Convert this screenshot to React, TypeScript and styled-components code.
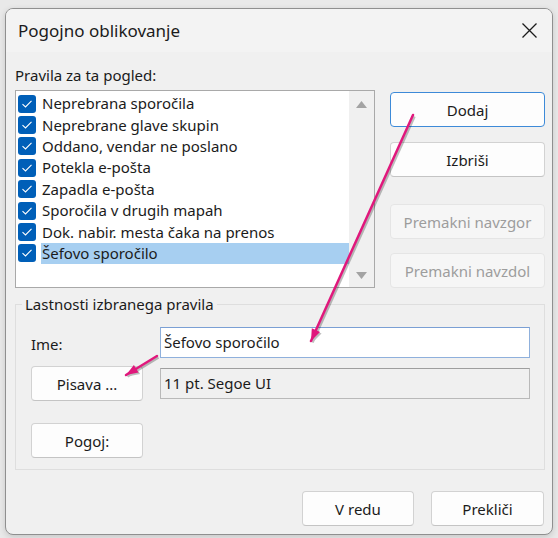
import React from 'react'
import styled, { createGlobalStyle } from 'styled-components'

const colors = {
  text: '#1b1b1b',
  accent: '#005fb8',
  select: '#a7cff1',
  body: '#f0f0f0',
  title: '#f3f3f3',
  line: '#d2d2d2',
  disabled: '#9d9d9d',
  arrow: '#e0187c',
}

const GlobalStyle = createGlobalStyle`
  html, body {
    margin: 0;
    padding: 0;
    background: #e9e9e9;
  }
  body {
    font-family: "Noto Sans", "Open Sans", "DejaVu Sans", sans-serif;
    font-size: 14px;
    color: ${colors.text};
  }
`

const Page = styled.div`
  width: 558px;
  height: 538px;
  box-sizing: border-box;
  padding: 8px 5px 3px 5px;
`

const Window = styled.div`
  position: relative;
  width: 548px;
  height: 527px;
  box-sizing: border-box;
  border: 1px solid #8f8f8f;
  border-radius: 8px;
  overflow: hidden;
  display: flex;
  flex-direction: column;
  background: ${colors.body};
  box-shadow: 0 2px 6px rgba(0, 0, 0, 0.15);
`

const TitleBar = styled.div`
  height: 43px;
  flex: none;
  display: flex;
  align-items: center;
  justify-content: space-between;
  padding: 0 15px 0 12px;
  background: ${colors.title};
  font-size: 17px;
`

const CloseButton = styled.div`
  width: 16px;
  height: 16px;
  display: flex;
  align-items: center;
  justify-content: center;
`

const Body = styled.div`
  flex: 1;
  display: flex;
  flex-direction: column;
  padding: 13px 7px 0 9px;
`

const TopRow = styled.div`
  display: flex;
  gap: 15px;
`

const LeftCol = styled.div`
  width: 360px;
  display: flex;
  flex-direction: column;
`

const Caption = styled.div`
  height: 20px;
  line-height: 20px;
  margin-bottom: 5px;
  font-size: 15px;
`

const ListBox = styled.div`
  height: 198px;
  box-sizing: border-box;
  border: 1px solid #a9a9a9;
  background: #fff;
  display: flex;
`

const Items = styled.div`
  flex: 1;
  padding: 2px 0 0 2px;
`

const Item = styled.div`
  height: 21.4px;
  display: flex;
  align-items: center;
  gap: 5px;
`

const Check = styled.div`
  width: 18px;
  height: 18px;
  border-radius: 3px;
  background: ${colors.accent};
  display: flex;
  align-items: center;
  justify-content: center;
  flex: none;
`

const ItemText = styled.div<{ $selected?: boolean }>`
  flex: 1;
  height: 21px;
  line-height: 21px;
  font-size: 15px;
  padding-left: 1px;
  background: ${({ $selected }) => ($selected ? colors.select : 'transparent')};
`

const ScrollBar = styled.div`
  width: 25px;
  background: ${colors.body};
  display: flex;
  flex-direction: column;
  justify-content: space-between;
  align-items: center;
  padding: 10px 0 8px;
`

const RightCol = styled.div`
  width: 155px;
  padding-top: 27px;
  display: flex;
  flex-direction: column;
`

const Button = styled.button<{ $primary?: boolean; $top?: number; $width?: number }>`
  width: ${({ $width }) => ($width ? `${$width}px` : '100%')};
  height: 35px;
  margin-top: ${({ $top }) => $top || 0}px;
  box-sizing: border-box;
  font-family: inherit;
  font-size: 15px;
  color: ${colors.text};
  background: #fdfdfd;
  border: 1px solid ${({ $primary }) => ($primary ? '#3d8ad8' : colors.line)};
  border-bottom-color: ${({ $primary }) => ($primary ? '#3d8ad8' : '#c4c4c4')};
  border-radius: 4px;
  padding: 0;
  &:disabled {
    background: #f6f6f6;
    border-color: #e5e5e5;
    color: ${colors.disabled};
  }
`

const Group = styled.fieldset`
  margin: 6px 0 0 0;
  padding: 13px 14px 11px 15px;
  width: 530px;
  box-sizing: border-box;
  border: 1px solid #dedede;
  border-radius: 0;
`

const Legend = styled.legend`
  padding: 0 3px;
  margin-left: -9px;
  font-size: 15px;
  line-height: 20px;
`

const PropsGrid = styled.div`
  display: grid;
  grid-template-columns: 112px 1fr;
  column-gap: 17px;
  row-gap: 8px;
  align-items: center;
`

const FieldLabel = styled.div`
  font-size: 15px;
  padding-left: 0;
  align-self: end;
  padding-bottom: 4px;
`

const TextField = styled.div<{ $readonly?: boolean }>`
  height: 31px;
  box-sizing: border-box;
  padding-left: 3px;
  line-height: 29px;
  font-size: 15px;
  background: ${({ $readonly }) => ($readonly ? colors.body : '#fff')};
  border: 1px solid ${({ $readonly }) => ($readonly ? '#b9b9b9' : '#8fb0dc')};
  border-top-color: ${({ $readonly }) => ($readonly ? '#9e9e9e' : '#7a9fd4')};
`

const Footer = styled.div`
  display: flex;
  justify-content: flex-end;
  gap: 17px;
  margin-top: 21px;
  padding-right: 1px;
`

const Overlay = styled.svg`
  position: absolute;
  left: -6px;
  top: -9px;
  width: 558px;
  height: 538px;
  pointer-events: none;
`

const rules = [
  'Neprebrana sporočila',
  'Neprebrane glave skupin',
  'Oddano, vendar ne poslano',
  'Potekla e-pošta',
  'Zapadla e-pošta',
  'Sporočila v drugih mapah',
  'Dok. nabir. mesta čaka na prenos',
  'Šefovo sporočilo',
]

const Tick = () => (
  <svg width="12" height="10" viewBox="0 0 12 10">
    <path d="M1.5 5.2 L4.5 8 L10.5 1.8" fill="none" stroke="#fff" strokeWidth="1.1" />
  </svg>
)

const Triangle = ({ down }: { down?: boolean }) => (
  <svg width="11" height="7" viewBox="0 0 11 7">
    <path d={down ? 'M0 0 H11 L5.5 7 Z' : 'M0 7 H11 L5.5 0 Z'} fill="#a3a3a3" />
  </svg>
)

const arrowHead = (x1: number, y1: number, x2: number, y2: number) => {
  const a = Math.atan2(y2 - y1, x2 - x1)
  const len = 12
  const w = 4.5
  const bx = x2 - len * Math.cos(a)
  const by = y2 - len * Math.sin(a)
  const px = -Math.sin(a) * w
  const py = Math.cos(a) * w
  return `M${x2} ${y2} L${bx + px} ${by + py} L${bx - px} ${by - py} Z`
}

const Arrow = ({ x1, y1, x2, y2 }: { x1: number; y1: number; x2: number; y2: number }) => (
  <g>
    <g opacity="0.25" transform="translate(1.5 1.5)">
      <line x1={x1} y1={y1} x2={x2} y2={y2} stroke="#000" strokeWidth="2.5" />
      <path d={arrowHead(x1, y1, x2, y2)} fill="#000" />
    </g>
    <line x1={x1} y1={y1} x2={x2} y2={y2} stroke={colors.arrow} strokeWidth="2.5" strokeLinecap="round" />
    <path d={arrowHead(x1, y1, x2, y2)} fill={colors.arrow} />
  </g>
)

export default function App() {
  return (
    <Page>
      <GlobalStyle />
      <Window>
        <TitleBar>
          <span>Pogojno oblikovanje</span>
          <CloseButton>
            <svg width="15" height="15" viewBox="0 0 15 15">
              <path d="M0.5 0.5 L14.5 14.5 M14.5 0.5 L0.5 14.5" stroke="#1b1b1b" strokeWidth="1.3" />
            </svg>
          </CloseButton>
        </TitleBar>
        <Body>
          <TopRow>
            <LeftCol>
              <Caption>Pravila za ta pogled:</Caption>
              <ListBox>
                <Items>
                  {rules.map((r, i) => (
                    <Item key={r}>
                      <Check>
                        <Tick />
                      </Check>
                      <ItemText $selected={i === rules.length - 1}>{r}</ItemText>
                    </Item>
                  ))}
                </Items>
                <ScrollBar>
                  <Triangle />
                  <Triangle down />
                </ScrollBar>
              </ListBox>
            </LeftCol>
            <RightCol>
              <Button $primary>Dodaj</Button>
              <Button $top={15}>Izbriši</Button>
              <Button $top={27} disabled>
                Premakni navzgor
              </Button>
              <Button $top={14} disabled>
                Premakni navzdol
              </Button>
            </RightCol>
          </TopRow>
          <Group>
            <Legend>Lastnosti izbranega pravila</Legend>
            <PropsGrid>
              <FieldLabel>Ime:</FieldLabel>
              <TextField>Šefovo sporočilo</TextField>
              <Button $width={112}>Pisava ...</Button>
              <TextField $readonly>11 pt. Segoe UI</TextField>
              <Button $width={112} $top={14}>
                Pogoj:
              </Button>
            </PropsGrid>
          </Group>
          <Footer>
            <Button $width={112}>V redu</Button>
            <Button $width={113}>Prekliči</Button>
          </Footer>
        </Body>
        <Overlay viewBox="0 0 558 538">
          <Arrow x1={413} y1={115} x2={311} y2={341} />
          <Arrow x1={157} y1={356} x2={126} y2={375} />
        </Overlay>
      </Window>
    </Page>
  )
}
